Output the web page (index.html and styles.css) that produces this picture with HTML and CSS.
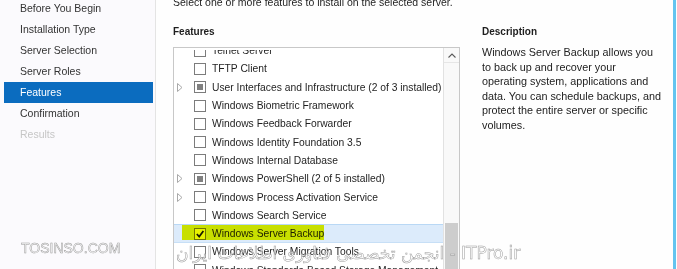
FILE: index.html
```html
<!DOCTYPE html>
<html lang="en">
<head>
<meta charset="utf-8">
<title>Add Roles and Features Wizard - Features</title>
<link rel="stylesheet" href="styles.css">
</head>
<body>
<div class="app">
  <nav class="sidebar">
    <ul class="nav">
      <li>Before You Begin</li>
      <li>Installation Type</li>
      <li>Server Selection</li>
      <li>Server Roles</li>
      <li class="active">Features</li>
      <li>Confirmation</li>
      <li class="disabled">Results</li>
    </ul>
  </nav>
  <main class="main">
    <p class="intro">Select one or more features to install on the selected server.</p>
    <div class="cols">
      <section class="features">
        <h2 class="heading">Features</h2>
        <div class="listbox">
          <div class="list">
            <div class="rows">
              <div class="row"><span class="tw"></span><span class="cb"></span><span class="label">Telnet Server</span></div>
              <div class="row"><span class="tw"></span><span class="cb"></span><span class="label">TFTP Client</span></div>
              <div class="row"><span class="tw"><svg class="tri" width="6" height="9" viewBox="0 0 6 9"><polygon points="0.5,0.5 5,4.5 0.5,8.5"/></svg></span><span class="cb ind"></span><span class="label">User Interfaces and Infrastructure (2 of 3 installed)</span></div>
              <div class="row"><span class="tw"></span><span class="cb"></span><span class="label">Windows Biometric Framework</span></div>
              <div class="row"><span class="tw"></span><span class="cb"></span><span class="label">Windows Feedback Forwarder</span></div>
              <div class="row"><span class="tw"></span><span class="cb"></span><span class="label">Windows Identity Foundation 3.5</span></div>
              <div class="row"><span class="tw"></span><span class="cb"></span><span class="label">Windows Internal Database</span></div>
              <div class="row"><span class="tw"><svg class="tri" width="6" height="9" viewBox="0 0 6 9"><polygon points="0.5,0.5 5,4.5 0.5,8.5"/></svg></span><span class="cb ind"></span><span class="label">Windows PowerShell (2 of 5 installed)</span></div>
              <div class="row"><span class="tw"><svg class="tri" width="6" height="9" viewBox="0 0 6 9"><polygon points="0.5,0.5 5,4.5 0.5,8.5"/></svg></span><span class="cb"></span><span class="label">Windows Process Activation Service</span></div>
              <div class="row"><span class="tw"></span><span class="cb"></span><span class="label">Windows Search Service</span></div>
              <div class="row selected"><span class="tw"></span><span class="cb"><svg class="check" width="10" height="10" viewBox="0 0 10 10"><polyline points="1.8,5 4.2,7.6 8.4,2"/></svg></span><span class="label">Windows Server Backup</span><span class="marker"></span></div>
              <div class="row"><span class="tw"></span><span class="cb"></span><span class="label">Windows Server Migration Tools</span></div>
              <div class="row"><span class="tw"></span><span class="cb"></span><span class="label">Windows Standards-Based Storage Management</span></div>
            </div>
          </div>
          <div class="scroll">
            <div class="up"><svg width="8" height="5" viewBox="0 0 8 5"><polyline points="0.5,4.5 4,1 7.5,4.5"/></svg></div>
            <div class="track"></div>
            <div class="thumb"></div>
          </div>
        </div>
      </section>
      <section class="desc">
        <h2 class="heading">Description</h2>
        <p class="desc-text">Windows Server Backup allows you to back up and recover your operating system, applications and data. You can schedule backups, and protect the entire server or specific volumes.</p>
      </section>
    </div>
  </main>
  <div class="edge"></div>
</div>
<div class="wm wm-site">TOSINSO.COM</div>
<div class="wm wm-fa">انجمن تخصصی فناوری اطلاعات ایران - ITPro.ir</div>
</body>
</html>
```

FILE: styles.css
```css
* { box-sizing: border-box; }
html, body { margin: 0; padding: 0; }
body {
  width: 677px;
  height: 269px;
  overflow: hidden;
  position: relative;
  background: #fefefe;
  font-family: "Liberation Sans", Arial, sans-serif;
  font-size: 10.5px;
  color: #1e1e1e;
}
.app { display: flex; height: 269px; }

.sidebar {
  width: 156px;
  flex: none;
  background: #fbfafd;
  border-right: 1px solid #e4e4e4;
}
.nav { list-style: none; margin: -2px 0 0 4px; padding: 0; width: 149px; }
.nav li { height: 21px; line-height: 21px; padding-left: 16px; color: #333; white-space: nowrap; }
.nav li.active { background: #0b6cbf; color: #fff; }
.nav li.disabled { color: #c6c6c6; }

.main { flex: 1; padding-left: 17px; }
.intro { margin: -5px 0 0; line-height: 15px; white-space: nowrap; }
.cols { display: flex; gap: 22px; margin-top: 14px; }
.heading { margin: 0; font-size: 10px; font-weight: bold; line-height: 15px; color: #1e1e1e; }

.features { width: 287px; flex: none; }
.listbox {
  margin-top: 8px;
  width: 287px;
  height: 240px;
  border: 1px solid #c8c8c8;
  display: flex;
  background: #fff;
}
.list { flex: 1; overflow: hidden; font-size: 10.3px; margin-top: 2px; }
.rows { margin-top: -8.5px; }
.row { height: 18.3px; display: flex; align-items: center; position: relative; white-space: nowrap; }
.row.selected { background: #dcebfb; border-top: 1px solid #b9d8f5; border-bottom: 1px solid #c7dff6; }
.tw { width: 20px; flex: none; padding-left: 3px; display: flex; align-items: center; }
.tri polygon { fill: #fff; stroke: #a9a9a9; stroke-width: 1; }
.cb {
  width: 12px; height: 12px; flex: none;
  border: 1px solid #7c7c7c;
  background: #fff;
  margin-right: 6px;
  position: relative;
}
.cb.ind::after { content: ""; position: absolute; left: 2px; top: 2px; right: 2px; bottom: 2px; background: #808080; }
.check { display: block; }
.check polyline { fill: none; stroke: #1a1a1a; stroke-width: 1.7; }
.label { color: #1e1e1e; }
.marker {
  position: absolute;
  left: 8px; top: 0; width: 142px; height: 15px;
  background: #e8f200;
  mix-blend-mode: multiply;
}

.scroll {
  width: 16px; flex: none;
  border-left: 1px solid #e2e2e2;
  background: #f9f9f9;
  display: flex; flex-direction: column;
}
.up {
  height: 15px; flex: none;
  display: flex; align-items: center; justify-content: center;
  border-bottom: 1px solid #e6e6e6;
}
.up polyline { fill: none; stroke: #5a5a5a; stroke-width: 1.1; }
.track { height: 160px; flex: none; }
.thumb { flex: 1; background: #cdcdcd; margin: 0 1px; }

.desc { width: 181px; flex: none; }
.desc-text { margin: 6px 0 0; font-size: 10.8px; line-height: 14.6px; color: #222; }

.edge { width: 3px; flex: none; background: #64c4ef; margin-right: 1px; }

.wm { position: absolute; white-space: nowrap; color: rgba(255,255,255,0.6); -webkit-text-stroke: 0.5px #999; }
.wm-site { left: 21px; top: 240px; font-size: 14px; line-height: 16px; }
.wm-fa { left: 176px; top: 243px; font-family: "DejaVu Sans", sans-serif; font-size: 17px; line-height: 20px; }
```
